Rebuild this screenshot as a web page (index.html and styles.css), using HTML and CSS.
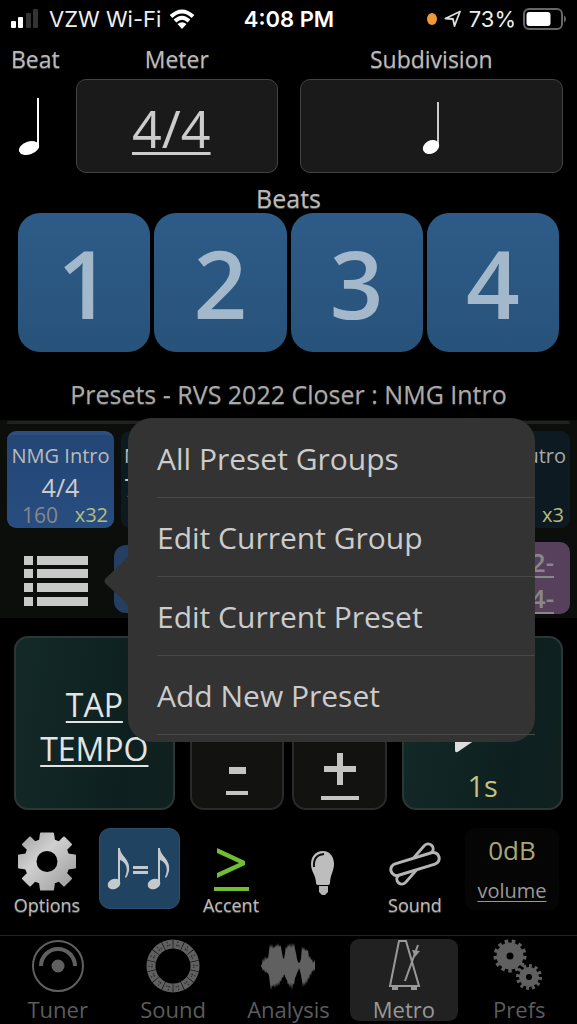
FILE: index.html
```html
<!DOCTYPE html>
<html lang="en">
<head>
<meta charset="utf-8">
<meta name="viewport" content="width=device-width, initial-scale=1">
<title>Metronome</title>
<link rel="stylesheet" href="styles.css">
</head>
<body>
<div class="app">
  <header class="status">
    <div class="status-side">
      <svg width="30" height="20" viewBox="0 0 30 20"><g fill="#fff"><rect x="0" y="12" width="5" height="7" rx="1"/><rect x="7" y="8" width="5" height="11" rx="1"/></g><g fill="#333"><rect x="15" y="4" width="5" height="15" rx="1"/><rect x="22" y="0" width="5" height="19" rx="1"/></g></svg>
      <span class="carrier">VZW Wi-Fi</span>
      <svg width="26" height="20" viewBox="0 0 26 20" fill="none" stroke="#fff" stroke-width="4"><path d="M2 7.500Q13-2.500 24 7.500"/><path d="M6 12Q13 5.500 20 12"/><path d="M13 20L8.500 15Q13 11.500 17.500 15Z" fill="#fff" stroke="none"/></svg>
    </div>
    <time class="clock">4:08 PM</time>
    <div class="status-side status-right">
      <span class="dot"></span>
      <svg width="18" height="18" viewBox="0 0 18 18" fill="none" stroke="#ddd" stroke-width="1.800" stroke-linejoin="round"><path d="M1.500 8.500L16 1.500L10.500 16L9 9Z"/></svg>
      <span class="charge">73%</span>
      <svg width="44" height="22" viewBox="0 0 44 22"><rect x="1" y="1" width="38" height="20" rx="5" fill="none" stroke="#666" stroke-width="2"/><rect x="3.500" y="4" width="24" height="14" rx="3" fill="#fff"/><path d="M41 7.500Q43 8 43 11T41 14.500Z" fill="#666"/></svg>
    </div>
  </header>

  <section class="settings">
    <span class="label beat-label" id="l-beat">Beat</span>
    <span class="label" id="l-meter">Meter</span>
    <span class="label" id="l-sub">Subdivision</span>
    <button class="beat-note" aria-labelledby="l-beat"><svg width="24" height="58" viewBox="0 0 24 58" fill="#fff"><rect x="20" y="0" width="2" height="50"/><ellipse cx="12" cy="50" rx="10.500" ry="6.500" transform="rotate(-20 12 50)"/></svg></button>
    <button class="box meter" aria-labelledby="l-meter">4/4</button>
    <button class="box" aria-labelledby="l-sub"><svg width="20" height="54" viewBox="0 0 20 54" fill="#fff"><rect x="16" y="1" width="2" height="45" fill="#ccc"/><ellipse cx="10" cy="46" rx="8.500" ry="6.500" transform="rotate(-28 10 46)"/></svg></button>
  </section>

  <section class="beats">
    <span class="label">Beats</span>
    <div class="beat-row">
      <button>1</button><button>2</button><button>3</button><button>4</button>
    </div>
  </section>

  <h1 class="preset-title">Presets - RVS 2022 Closer : NMG Intro</h1>

  <section class="presets">
    <div class="scroll-line"></div>
    <div class="preset-grid">
      <button class="preset current"><span class="name">NMG Intro</span><span class="sig">4/4</span><span class="nums"><span>160</span><span class="times">x32</span></span></button>
      <button class="preset left"><span class="name">N</span><span class="sig">7</span></button>
      <button class="preset"></button>
      <button class="preset"></button>
      <button class="preset right"><span class="name">Outro</span><span class="sig"></span><span class="nums"><span class="times">x3</span></span></button>
    </div>
    <div class="preset-tools">
      <button class="list-btn" aria-label="Preset menu"><svg width="66" height="52" viewBox="0 0 66 52" fill="#c9c9c9"><path d="M1 1h9v9h-9zM14 1h51v9H14zM1 14h9v9h-9zM14 14h51v9H14zM1 28h9v9h-9zM14 28h51v9H14zM1 42h9v9h-9zM14 42h51v9H14z"/></svg></button>
      <button class="step" aria-label="Previous preset"></button>
      <button class="jump"><span>2-</span><span>4-</span></button>
    </div>
    <nav class="menu">
      <svg class="menu-arrow" width="25" height="50" viewBox="0 0 25 50"><path d="M25 0Q22 4 18 8L3 22Q0 25 3 28L18 42Q22 46 25 50Z" fill="#333"/></svg>
      <button>All Preset Groups</button>
      <button>Edit Current Group</button>
      <button>Edit Current Preset</button>
      <button>Add New Preset</button>
    </nav>
  </section>

  <section class="transport">
    <button class="pad tap">TAP<br>TEMPO</button>
    <button class="pad small minus" aria-label="Slower"><svg width="38" height="48" viewBox="0 0 38 48" fill="#c4c4c1"><path d="M11 18h17v7H11zM8 42h22v4H8z"/></svg></button>
    <button class="pad small" aria-label="Faster"><svg width="38" height="48" viewBox="0 0 38 48" fill="#c4c4c1"><path d="M16 1h6v13h13v6H22v13h-6V20H3v-6h13zM0 44h38v4H0z"/></svg></button>
    <button class="pad play"><svg width="60" height="76" viewBox="0 0 60 76" fill="#ddd"><path d="M2 4Q2 0 6 2L56 36Q58 38 56 40L6 74Q2 77 2 73Z"/></svg><span>1s</span></button>
  </section>

  <section class="tools">
    <button class="tool"><svg width="58" height="59" viewBox="-29 -29.500 58 59"><defs><linearGradient id="metal" x1="0" y1="0" x2="1" y2="1"><stop offset="0" stop-color="#a0a0a0"/><stop offset=".4" stop-color="#d0d0d0"/><stop offset="1" stop-color="#999"/></linearGradient><mask id="hub" x="-30" y="-30" width="60" height="60" maskUnits="userSpaceOnUse"><rect x="-30" y="-30" width="60" height="60" fill="#fff"/><circle r="10.500" fill="#000"/></mask></defs><path mask="url(#hub)" fill="url(#metal)" stroke="url(#metal)" stroke-width="2" stroke-linejoin="round" d="M-6-28H6L7-21L12-19L17-24L24-17L19-12L21-7L28-6V6L21 7L19 12L24 17L17 24L12 19L7 21L6 28H-6L-7 21L-12 19L-17 24L-24 17L-19 12L-21 7L-28 6V-6L-21-7L-19-12L-24-17L-17-24L-12-19L-7-21Z"/></svg><span>Options</span></button>
    <button class="swing" aria-label="Straight eighths"><svg width="66" height="44" viewBox="0 0 66 44" fill="#c5c9cc"><g id="eighth"><ellipse cx="8" cy="37" rx="6.500" ry="5" transform="rotate(-20 8 37)"/><path d="M12 1h2c0 8 11 11 9 23q-1 4-3 7l-1-1c4-8 1-15-5-17v24h-2z"/></g><use href="#eighth" x="40"/><path d="M27 19h15v3H27zM27 24h15v3H27z"/></svg></button>
    <button class="tool"><svg width="36" height="44" viewBox="0 0 36 44" fill="#72bd31"><path d="M4 1L32 14V18L4 31V26L26 16L4 6ZM1 40h35v4H1z"/></svg><span>Accent</span></button>
    <button class="bulb" aria-label="Flash"><svg width="26" height="46" viewBox="0 0 26 46"><path d="M13 1C5 1 1 7 1 14C1 22 6 25 6 33Q6 35 8 35H18Q20 35 20 33C20 25 24 21 24 14C24 7 20 1 13 1Z" fill="#bdbdbd"/><path d="M4 17Q3 5 14 4" fill="none" stroke="#111" stroke-width="2"/><path d="M9 36H18V42L15 45H12L9 42Z" fill="#b5b5b5"/></svg></button>
    <button class="tool"><svg class="sticks" width="52" height="46" viewBox="0 0 52 46" fill="#000" stroke="#b5b5b5" stroke-width="3"><rect x="-25" y="-5" width="50" height="10" rx="5" transform="translate(26 23) rotate(-49)"/><rect x="-25" y="-6" width="50" height="12" rx="6" transform="translate(26 23) rotate(-17)"/></svg><span>Sound</span></button>
    <button class="volume"><span class="db">0dB</span><span class="vol">volume</span></button>
  </section>

  <nav class="tabs">
    <button><svg width="54" height="54" viewBox="-27 -27 54 54" fill="none" stroke="#606060"><circle r="25" stroke-width="2"/><circle r="6.500" fill="#606060" stroke="none"/><path d="M-17 0A17 17 0 0 1 17 0" stroke-width="4"/></svg><span>Tuner</span></button>
    <button><svg width="54" height="54" viewBox="-27 -27 54 54" fill="none"><circle r="22" stroke="#606060" stroke-width="9" pathLength="140" stroke-dasharray="9.400 .6" stroke-dashoffset="4.700"/><g stroke="#2a2a2a" stroke-width="1.500"><circle r="21" pathLength="140" stroke-dasharray="1.500 1 1 6.500" stroke-dashoffset="1.500"/><circle r="24" pathLength="140" stroke-dasharray="1 9" stroke-dashoffset="1"/></g></svg><span>Sound</span></button>
    <button><svg width="54" height="54" viewBox="0 0 54 54" fill="#606060"><path d="M0 27L1 25L2 19L3 23L4 17L5 21L6 18L7 20L8 12L9 5L10 9L11 5L12 10L13 7L14 9L15 5L16 8L17 4L18 8L19 6L20 8L21 14L22 19L23 20L24 14L25 7L26 10L27 5L28 8L29 4L30 9L31 4L32 8L33 4L34 10L35 14L36 20L37 23L38 24L39 23L40 20L41 7L42 11L43 8L44 12L45 10L46 12L47 11L48 19L49 17L50 21L51 20L52 24L54 21V32L53 30L52 33L51 31L50 37L49 34L48 41L47 38L46 45L45 41L44 47L43 43L42 48L41 42L40 36L39 32L38 29L37 32L36 34L35 37L34 39L33 46L32 44L31 51L30 44L29 49L28 44L27 46L26 41L25 40L24 37L23 35L22 39L21 38L20 43L19 41L18 47L17 43L16 48L15 44L14 49L13 45L12 48L11 46L10 51L9 45L8 37L7 34L6 34L5 32L4 34L3 30L2 32L1 29Z"/></svg><span>Analysis</span></button>
    <button class="active"><svg width="36" height="52" viewBox="0 0 36 52" fill="none" stroke="#999" stroke-width="2"><path d="M13 2H20L33 47H4Z"/><path d="M19 42L32 6" stroke-width="2"/><path d="M26 11L34 12L29 18Z" fill="#999" stroke="none"/><path d="M7 48h4v2H7zM26 48h4v2h-4z" fill="#999"/></svg><span>Metro</span></button>
    <button><svg width="54" height="54" viewBox="0 0 54 54" fill="none" stroke="#606060"><circle cx="18" cy="17" r="8.500" stroke-width="10"/><circle cx="18" cy="17" r="14.500" stroke-width="4" pathLength="130" stroke-dasharray="5 5"/><circle cx="37" cy="38" r="6.500" stroke-width="7"/><circle cx="37" cy="38" r="11" stroke-width="4" pathLength="120" stroke-dasharray="5 5"/></svg><span>Prefs</span></button>
  </nav>
</div>
</body>
</html>
```
FILE: styles.css
```css
* { box-sizing: border-box; }
body { margin: 0; background: #000; color: #bbb; font-family: "Open Sans", "Noto Sans", sans-serif; }
button { margin: 0; padding: 0; border: 0; background: none; color: inherit; font: inherit; }
svg { display: block; flex: none; }
.app { display: flex; flex-direction: column; min-height: 100vh; overflow: hidden; }

.status { display: grid; grid-template-columns: 1fr auto 1fr; align-items: center; height: 38px; padding: 0 10px 0 11px; font: 22px/24px Inter, sans-serif; color: #eee; }
.status-side { display: flex; align-items: center; gap: 8px; white-space: nowrap; }
.status-right { justify-content: flex-end; gap: 7px; }
.clock { font-weight: 600; color: #fff; }
.dot { width: 10px; height: 12px; border-radius: 50%; background: #f09a37; }

.label { font-size: 23px; line-height: 32px; text-align: center; text-shadow: 0 1px 1px #555; }
.settings { display: grid; grid-template-columns: 50px 202fr 264fr; column-gap: 22px; grid-template-rows: 41px 94px; padding: 0 14px 0 4px; }
.settings .label { align-self: center; }
.settings .beat-label { padding-left: 7px; }
.beat-note { display: grid; place-items: center; padding-top: 2px; }
.box { display: grid; place-items: center; padding-top: 4px; border: 1px solid #444; border-radius: 10px; background: #1a1a1a; }
.meter { padding-right: 11px; font-size: 52px; line-height: 56px; color: #ccc; text-decoration: underline; text-decoration-thickness: 3px; text-underline-offset: 4px; }

.beats { display: flex; flex-direction: column; padding: 10px 18px 0; }
.beats .label { font-size: 25px; line-height: 30px; }
.beat-row { display: grid; grid-template-columns: repeat(4, 1fr); gap: 4px; }
.beat-row button { height: 139px; padding-top: 2px; border-radius: 22px; background: linear-gradient(#2e5c88, #27527a); color: #a3b8ca; font-size: 94px; line-height: 137px; font-weight: 600; }

.preset-title { margin: 22px 0 0; height: 46px; font-size: 25px; line-height: 40px; font-weight: 400; text-align: center; color: #aaa; text-shadow: 0 1px 1px #444; }
.presets { position: relative; height: 198px; padding: 1px 7px 0; background: #0c0e0c; }
.scroll-line { height: 3px; border-radius: 2px; background: #222; }
.preset-grid { display: grid; grid-template-columns: repeat(5, 1fr); gap: 7px; margin-top: 7px; }
.preset { display: flex; flex-direction: column; height: 97px; padding: 9px 4px 0 3px; border-radius: 9px; background: #0d1a22; text-align: center; white-space: nowrap; overflow: hidden; }
.current { background: linear-gradient(#234675, #284d80); border-top: 4px solid #2b4f80; padding: 5px 0 0; color: #bbb; }
.name { font-size: 20px; line-height: 32px; }
.sig { font-size: 25px; line-height: 31px; min-height: 31px; color: #ccc; }
.nums { display: flex; justify-content: space-between; padding: 0 6px 0 15px; font-size: 21px; line-height: 24px; color: #888; }
.times { margin-left: auto; font-size: 20px; color: #b9bd7c; }
.left { text-align: left; color: #bbb; }
.right { text-align: right; color: #aaa; }
.right .nums { padding-right: 2px; }
.preset-tools { display: flex; align-items: center; height: 90px; }
.list-btn { padding: 18px 25px 2px 16px; }
.step { width: 100px; height: 68px; border-radius: 12px; background: #243f61; margin-top: 12px; }
.jump { width: 100px; height: 72px; margin: 10px 0 0 auto; padding: 2px 16px 0 0; border-radius: 10px; background: #56405c; color: #888; display: flex; flex-direction: column; align-items: flex-end; font-size: 26px; line-height: 36px; font-weight: 600; text-decoration: underline; text-underline-offset: 4px; }

.menu { position: absolute; z-index: 2; top: -2px; left: 128px; right: 7.2%; padding: 1px 0 7px 29px; border-radius: 24px; background: #333; color: #ccc; display: flex; flex-direction: column; }
.menu button { height: 79px; padding-top: 2px; border-bottom: 1px solid #484848; text-align: left; font-size: 30px; line-height: 76px; white-space: nowrap; }
.menu-arrow { position: absolute; right: 100%; top: 138px; }

.transport { display: grid; grid-template-columns: 168fr 95fr 95fr 168fr; column-gap: 8px; padding: 18px 14px 0; align-items: end; }
.pad { height: 174px; border: 2px solid #2b3735; border-radius: 14px; background: linear-gradient(100deg, #142a28, #0d201f 70%, #10211f); }
.tap { margin-right: 7px; padding-top: 8px; font-size: 32px; line-height: 44px; color: #e4e4e4; text-decoration: underline; text-decoration-thickness: 2px; text-underline-offset: 4px; }
.small { border-color: #2a2a2a; background: #121311; display: flex; justify-content: center; align-items: flex-end; padding-bottom: 8px; }
.minus { padding-bottom: 11px; }
.play { margin-left: 7px; display: flex; flex-direction: column; align-items: center; justify-content: flex-end; padding-bottom: 3px; gap: 14px; }
.play span { font-size: 29px; line-height: 38px; color: #c5c07e; }

.tools { display: grid; grid-template-columns: repeat(5, 92fr) 98fr; justify-items: center; align-items: start; height: 125px; padding: 18px 18px 0 1px; }
.tool, .volume { display: flex; flex-direction: column; align-items: center; justify-content: flex-end; height: 91px; }
.tool span { font-size: 18px; line-height: 28px; text-shadow: 0 1px 1px #555; }
.sticks { margin-bottom: 4px; }
.swing { width: 81px; height: 81px; border-radius: 11px; background: #214362; display: grid; place-items: center; border: 1px solid #2d506f; }
.bulb { width: 50px; height: 90px; display: grid; place-items: center; }
.volume { justify-self: end; width: 94px; height: 82px; border-radius: 10px; background: #050505; }
.db { font-size: 26px; line-height: 44px; color: #a5a878; }
.vol { font-size: 20px; line-height: 38px; color: #999; text-decoration: underline; text-decoration-thickness: 1px; text-underline-offset: 3px; }

.tabs { display: grid; grid-template-columns: repeat(5, 1fr); border-top: 1px solid #222; padding: 3px 0; }
.tabs button { display: flex; flex-direction: column; align-items: center; height: 82px; margin: 0 4px; color: #5c5c5c; font-size: 22px; line-height: 32px; }
.tabs .active { background: #212121; color: #999; border-radius: 9px; }
.active svg { margin-bottom: 2px; }
```
